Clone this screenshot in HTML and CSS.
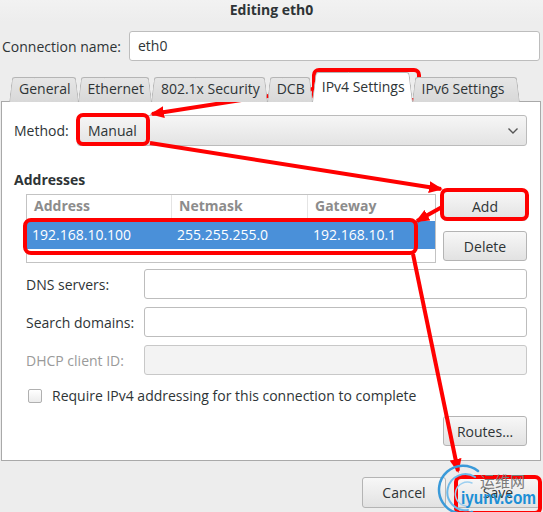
FILE: index.html
```html
<!DOCTYPE html>
<html lang="en">
<head>
    <meta charset="UTF-8">
    <meta name="viewport" content="width=device-width, initial-scale=1.0">
    <title>Editing eth0</title>
    <link rel="stylesheet" href="styles.css">
</head>
<body>
    <div class="titlebar">Editing eth0</div>

    <div class="conn-row">
        <label class="conn-label">Connection name:</label>
        <div class="entry conn-entry">eth0</div>
    </div>

    <div class="notebook">
        <div class="tabs">
            <div class="tab">General</div>
            <div class="tab">Ethernet</div>
            <div class="tab">802.1x Security</div>
            <div class="tab">DCB</div>
            <div class="tab active">IPv4 Settings</div>
            <div class="tab">IPv6 Settings</div>
        </div>

        <div class="panel">
            <div class="method-row">
                <span class="method-label">Method:</span>
                <div class="combo">
                    <span>Manual</span>
                    <svg class="chevron" width="12" height="8" viewBox="0 0 12 8">
                        <path d="M1.5 1.5 L6 6 L10.5 1.5" fill="none" stroke="#555" stroke-width="1.4"/>
                    </svg>
                </div>
            </div>

            <h4 class="section-title">Addresses</h4>

            <div class="addr-block">
                <div class="tree">
                    <div class="tree-head">
                        <div class="col c1">Address</div>
                        <div class="col c2">Netmask</div>
                        <div class="col c3">Gateway</div>
                    </div>
                    <div class="tree-row selected">
                        <div class="col c1">192.168.10.100</div>
                        <div class="col c2">255.255.255.0</div>
                        <div class="col c3">192.168.10.1</div>
                    </div>
                </div>
                <div class="addr-buttons">
                    <button class="btn">Add</button>
                    <button class="btn">Delete</button>
                </div>
            </div>

            <div class="field-row">
                <span class="field-label">DNS servers:</span>
                <div class="entry field-entry"></div>
            </div>
            <div class="field-row">
                <span class="field-label">Search domains:</span>
                <div class="entry field-entry"></div>
            </div>
            <div class="field-row disabled">
                <span class="field-label">DHCP client ID:</span>
                <div class="entry field-entry"></div>
            </div>

            <div class="check-row">
                <span class="checkbox"></span>
                <span>Require IPv4 addressing for this connection to complete</span>
            </div>

            <div class="routes-row">
                <button class="btn">Routes…</button>
            </div>
        </div>
    </div>

    <div class="dialog-buttons">
        <button class="btn">Cancel</button>
        <button class="btn">Save</button>
    </div>

    <!-- red annotations and watermark drawn over the screenshot -->
    <svg class="overlay" width="543" height="512" viewBox="0 0 543 512">
        <defs>
            <marker id="head" markerWidth="14" markerHeight="12" refX="12" refY="6" orient="auto" markerUnits="userSpaceOnUse">
                <path d="M0 0 L14 6 L0 12 Z" fill="#f00"/>
            </marker>
        </defs>
        <g fill="none" stroke="#f00" stroke-width="4">
            <rect x="314" y="70" width="105" height="30" rx="5"/>
            <rect x="78" y="115" width="70" height="29" rx="5"/>
            <rect x="442" y="190" width="85" height="29" rx="5"/>
            <rect x="25" y="220" width="391" height="33" rx="6"/>
            <rect x="456" y="477" width="84" height="36" rx="5"/>
            <line x1="313" y1="89" x2="152" y2="114" marker-end="url(#head)"/>
            <line x1="150" y1="143" x2="441" y2="189" marker-end="url(#head)"/>
            <line x1="442" y1="207" x2="417" y2="221" marker-end="url(#head)"/>
            <line x1="413" y1="254" x2="458" y2="471" marker-end="url(#head)"/>
        </g>
        <g fill="none" stroke-linecap="round">
            <path d="M478 471 A24 24 0 1 0 472 512" stroke="#3a9ad9" stroke-width="2.5"/>
            <path d="M475 477 A18 18 0 1 0 468 510" stroke="#6bb8e8" stroke-width="2"/>
            <path d="M472 483 A12 12 0 1 0 466 506" stroke="#9ccff0" stroke-width="1.5"/>
        </g>
        <text class="wm-cn" x="480" y="487" textLength="45">运维网</text>
        <text class="wm-en" x="461" y="504" textLength="75" lengthAdjust="spacingAndGlyphs">iyunv.com</text>
    </svg>
</body>
</html>
```

FILE: styles.css
```css
body {
    margin: 0;
    width: 543px;
    height: 512px;
    overflow: hidden;
    background: #ededed;
    font-family: "Open Sans", "Noto Sans", sans-serif;
    font-size: 14px;
    color: #2e3436;
    position: relative;
}
.titlebar {
    height: 22px;
    line-height: 20px;
    text-align: center;
    font-weight: bold;
    background: linear-gradient(#f2f2f2, #ededed);
}

/* top row */
.conn-row {
    display: flex;
    align-items: center;
    margin-top: 9px;
    height: 30px;
}
.conn-label {
    width: 129px;
    padding-left: 2px;
    box-sizing: border-box;
}
.entry {
    box-sizing: border-box;
    height: 30px;
    border: 1px solid #bdbdbd;
    border-radius: 3px;
    background: #fff;
    padding: 0 8px;
    line-height: 28px;
}
.conn-entry { width: 411px; }

/* notebook */
.notebook {
    margin: 11px 0 0 1px;
    width: 540px;
}
.tabs {
    display: flex;
    align-items: flex-end;
    padding-left: 8px;
    height: 30px;
    position: relative;
    z-index: 1;
    margin-bottom: -1px;
}
.tab {
    position: relative;
    z-index: 0;
    height: 25px;
    line-height: 24px;
    padding: 0 8px 0 10px;
    box-sizing: border-box;
    margin-right: -1px;
}
.tab:last-child { padding-right: 16px; }
/* trapezoid tab shape: two skewed halves */
.tab::before, .tab::after {
    content: "";
    position: absolute;
    top: 0;
    bottom: 0;
    z-index: -1;
    border-top: 1px solid #b5b5b5;
    background: linear-gradient(#e6e6e6, #d8d8d8);
}
.tab::before {
    left: 0;
    right: 40%;
    border-left: 1px solid #b5b5b5;
    border-radius: 3px 0 0 0;
    transform: skewX(-7deg);
    transform-origin: bottom left;
}
.tab::after {
    left: 40%;
    right: 0;
    border-right: 1px solid #b5b5b5;
    border-radius: 0 3px 0 0;
    transform: skewX(7deg);
    transform-origin: bottom right;
}
.tab.active {
    height: 30px;
    line-height: 30px;
    z-index: 1;
}
.tab.active::before, .tab.active::after { background: #fff; }
.panel {
    box-sizing: border-box;
    height: 360px;
    border: 1px solid #a9a9a9;
    background: #fff;
    padding: 13px 13px 0 12px;
}

/* method */
.method-row {
    display: flex;
    align-items: center;
}
.method-label { width: 63px; }
.combo {
    box-sizing: border-box;
    width: 450px;
    height: 31px;
    display: flex;
    align-items: center;
    justify-content: space-between;
    padding: 0 7px 0 10px;
    border: 1px solid #bbb;
    border-radius: 3px;
    background: linear-gradient(#f6f6f6, #e3e3e3);
}
.section-title {
    margin: 25px 0 8px 0;
    font-size: 14px;
    font-weight: bold;
    line-height: 18px;
}

/* address list */
.addr-block {
    display: flex;
    justify-content: space-between;
    padding-left: 12px;
    margin-top: -6px;
}
.tree {
    box-sizing: border-box;
    width: 410px;
    height: 69px;
    margin-top: 3px;
    border: 1px solid #c3c3c3;
}
.tree-head, .tree-row {
    display: flex;
}
.tree-head {
    height: 26px;
    line-height: 22px;
    color: #8c8c8c;
    font-weight: bold;
}
.tree-head .col { border-right: 1px solid #e4e4e4; padding-left: 7px; }
.tree-head .c3 { border-right: none; }
.tree-row {
    height: 28px;
    line-height: 28px;
}
.tree-row .col { padding-left: 5px; }
.tree-row.selected {
    background: #4a90d9;
    color: #fff;
}
.col { box-sizing: border-box; }
.c1 { width: 145px; }
.c2 { width: 136px; }
.c3 { flex: 1; }
.addr-buttons {
    display: flex;
    flex-direction: column;
    gap: 10px;
}

.btn {
    box-sizing: border-box;
    width: 84px;
    height: 30px;
    font: inherit;
    color: #2e3436;
    border: 1px solid #b4b4b4;
    border-radius: 3px;
    background: linear-gradient(#f7f7f7, #e2e2e2);
    padding: 0;
}

/* entries */
.field-row {
    display: flex;
    align-items: center;
    padding-left: 12px;
    margin-top: 8px;
}
.addr-block + .field-row { margin-top: 6px; }
.field-label { width: 118px; }
.field-entry { width: 383px; }
.field-row.disabled .field-label { color: #9a9a9a; }
.field-row.disabled .field-entry { background: #f3f3f3; border-color: #c8c8c8; }

.check-row {
    display: flex;
    align-items: center;
    gap: 10px;
    padding-left: 14px;
    margin-top: 11px;
}
.checkbox {
    width: 12px;
    height: 12px;
    border: 1px solid #b0b0b0;
    border-radius: 2px;
    background: linear-gradient(#fff, #ececec);
}
.routes-row {
    display: flex;
    justify-content: flex-end;
    margin-top: 11px;
}

.dialog-buttons {
    display: flex;
    justify-content: flex-end;
    gap: 10px;
    padding-right: 3px;
    margin-top: 16px;
}
.dialog-buttons .btn { height: 31px; }

.overlay {
    position: absolute;
    left: 0;
    top: 0;
    pointer-events: none;
}
.wm-cn {
    font-family: "Noto Sans CJK SC", sans-serif;
    font-size: 15px;
    fill: #7a7a7a;
}
.wm-en {
    font-family: "Liberation Sans", sans-serif;
    font-size: 18px;
    font-weight: bold;
    fill: #1c8fd6;
}
```
